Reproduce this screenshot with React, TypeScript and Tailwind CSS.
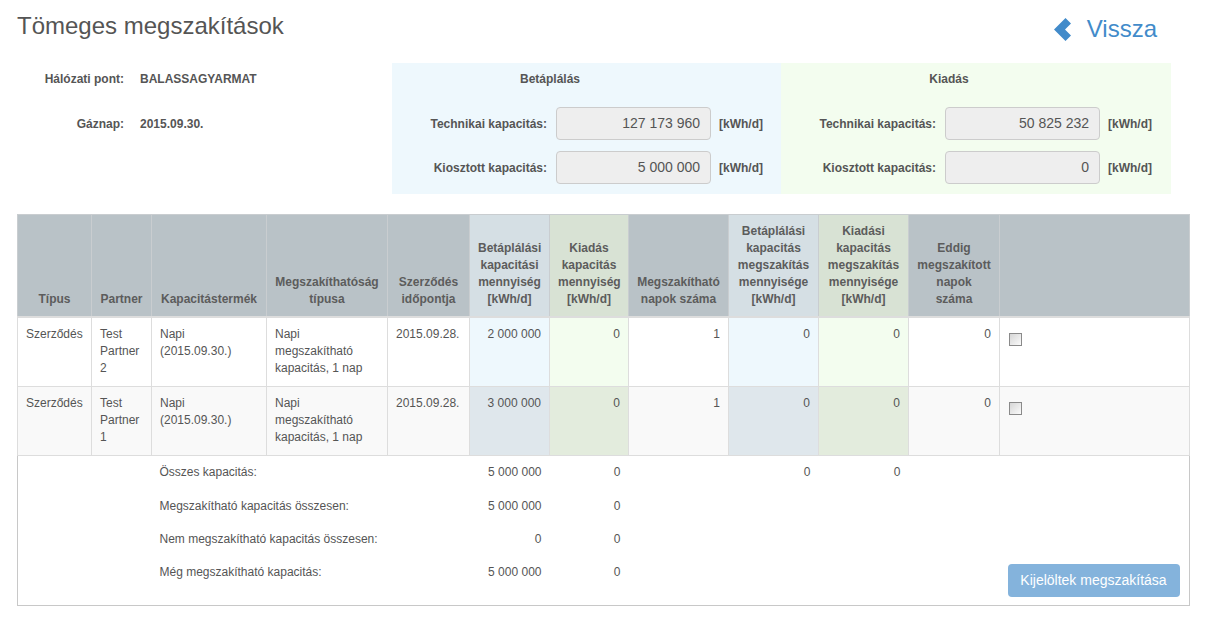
import React from 'react'

interface IRow {
   tipus: string
   partner: string
   termek: string
   megszakithatosag: string
   datum: string
   betap: string
   kiadas: string
   napok: string
   betapMegsz: string
   kiadasMegsz: string
   eddig: string
}

const rows: IRow[] = [
   {
      tipus: 'Szerződés',
      partner: 'Test Partner 2',
      termek: 'Napi (2015.09.30.)',
      megszakithatosag: 'Napi megszakítható kapacitás, 1 nap',
      datum: '2015.09.28.',
      betap: '2 000 000',
      kiadas: '0',
      napok: '1',
      betapMegsz: '0',
      kiadasMegsz: '0',
      eddig: '0',
   },
   {
      tipus: 'Szerződés',
      partner: 'Test Partner 1',
      termek: 'Napi (2015.09.30.)',
      megszakithatosag: 'Napi megszakítható kapacitás, 1 nap',
      datum: '2015.09.28.',
      betap: '3 000 000',
      kiadas: '0',
      napok: '1',
      betapMegsz: '0',
      kiadasMegsz: '0',
      eddig: '0',
   },
]

const summary = [
   { label: 'Összes kapacitás:', betap: '5 000 000', kiadas: '0', extra: true, h: 'h-[33px]' },
   { label: 'Megszakítható kapacitás összesen:', betap: '5 000 000', kiadas: '0', extra: false, h: 'h-[34px]' },
   { label: 'Nem megszakítható kapacitás összesen:', betap: '0', kiadas: '0', extra: false, h: 'h-[33px]' },
   { label: 'Még megszakítható kapacitás:', betap: '5 000 000', kiadas: '0', extra: false, h: 'h-[33px]' },
]

function CapacityPanel({
   title,
   titleWidth,
   bg,
   technikai,
   kiosztott,
}: {
   title: string
   titleWidth: string
   bg: string
   technikai: string
   kiosztott: string
}) {
   const line = (label: string, value: string, extra: string) => (
      <div className={`flex items-center ${extra}`}>
         <div className="w-[155px] text-right font-bold">{label}</div>
         <div className="ml-[9px] flex h-[33px] w-[155px] items-center justify-end rounded-[4px] border border-[#ccc] bg-[#eeeeee] px-[10px] text-[14px]">
            {value}
         </div>
         <div className="ml-[8px] font-bold">[kWh/d]</div>
      </div>
   )
   return (
      <div className={`flex-none ${bg} pt-[8px] pb-[10px]`}>
         <div className={`${titleWidth} text-center font-bold leading-[17px]`}>{title}</div>
         {line('Technikai kapacitás:', technikai, 'mt-[19px]')}
         {line('Kiosztott kapacitás:', kiosztott, 'mt-[11px]')}
      </div>
   )
}

function Checkbox() {
   return (
      <span className="mt-[7px] ml-[1px] block h-[13px] w-[13px] border border-[#8a8a8a] bg-gradient-to-br from-[#d6d6d6] to-[#fbfbfb]" />
   )
}

export default function App() {
   const th = 'border border-[#c9cdd0] p-[8px] align-bottom text-center font-bold leading-[17px] text-[#5c5c5c]'
   const td = 'border border-[#dddddd] px-[8px] pt-[8px] pb-[9px] align-top leading-[17px]'

   return (
      <div className="min-h-[625px] w-[1214px] bg-white pl-[17px] font-['Liberation_Sans',Arial,sans-serif] text-[12px] text-[#555]">
         <div className="w-[1172px]">
            {/* header */}
            <div className="flex h-[39px] items-start justify-between pt-[13px]">
               <h1 className="text-[24px] leading-[26px] text-[#555]">Tömeges megszakítások</h1>
               <a className="mt-[3px] mr-[32px] flex h-[26px] items-center text-[24px] leading-[26px] text-[#428bca]">
                  <svg width="18" height="23" viewBox="0 0 18 23" className="mt-[1px]">
                     <polygon points="0,11.5 11.5,0 17,5.5 11,11.5 17,17.5 11.5,23" fill="#428bca" />
                  </svg>
                  <span className="ml-[15px]">Vissza</span>
               </a>
            </div>

            {/* info */}
            <div className="mt-[24px] flex">
               <div className="w-[375px] flex-none pt-[8px] font-bold">
                  <div className="flex leading-[17px]">
                     <div className="w-[107px] text-right">Hálózati pont:</div>
                     <div className="ml-[16px]">BALASSAGYARMAT</div>
                  </div>
                  <div className="mt-[19px] flex h-[33px] items-center">
                     <div className="w-[107px] text-right">Gáznap:</div>
                     <div className="ml-[16px]">2015.09.30.</div>
                  </div>
               </div>
               <div className="w-[389px] flex-none">
                  <CapacityPanel
                     title="Betáplálás"
                     titleWidth="w-[316px]"
                     bg="bg-[#eef8fd]"
                     technikai="127 173 960"
                     kiosztott="5 000 000"
                  />
               </div>
               <div className="w-[390px] flex-none">
                  <CapacityPanel
                     title="Kiadás"
                     titleWidth="w-[336px]"
                     bg="bg-[#f3fdef]"
                     technikai="50 825 232"
                     kiosztott="0"
                  />
               </div>
            </div>

            {/* table */}
            <table className="mt-[20px] w-[1172px] table-fixed border-collapse border border-[#c8c8c8]">
               <colgroup>
                  <col className="w-[74px]" />
                  <col className="w-[60px]" />
                  <col className="w-[115px]" />
                  <col className="w-[121px]" />
                  <col className="w-[82px]" />
                  <col className="w-[80px]" />
                  <col className="w-[79px]" />
                  <col className="w-[100px]" />
                  <col className="w-[90px]" />
                  <col className="w-[90px]" />
                  <col className="w-[91px]" />
                  <col className="w-[190px]" />
               </colgroup>
               <thead>
                  <tr className="border-b-2 border-[#dddddd]">
                     <th className={`${th} bg-[#b9c2c7]`}>Típus</th>
                     <th className={`${th} bg-[#b9c2c7]`}>Partner</th>
                     <th className={`${th} bg-[#b9c2c7]`}>Kapacitástermék</th>
                     <th className={`${th} bg-[#b9c2c7]`}>Megszakíthatóság típusa</th>
                     <th className={`${th} bg-[#b9c2c7]`}>Szerződés időpontja</th>
                     <th className={`${th} bg-[#d5dfe4]`}>Betáplálási kapacitási mennyiség [kWh/d]</th>
                     <th className={`${th} bg-[#d8e2d4]`}>Kiadás kapacitás mennyiség [kWh/d]</th>
                     <th className={`${th} bg-[#b9c2c7]`}>Megszakítható napok száma</th>
                     <th className={`${th} bg-[#d5dfe4]`}>Betáplálási kapacitás megszakítás mennyisége [kWh/d]</th>
                     <th className={`${th} bg-[#d8e2d4]`}>Kiadási kapacitás megszakítás mennyisége [kWh/d]</th>
                     <th className={`${th} bg-[#b9c2c7]`}>Eddig megszakított napok száma</th>
                     <th className={`${th} bg-[#b9c2c7]`}></th>
                  </tr>
               </thead>
               <tbody>
                  {rows.map((r, i) => {
                     const odd = i % 2 === 1
                     const blue = odd ? 'bg-[#dfe7ec]' : 'bg-[#eef8fd]'
                     const green = odd ? 'bg-[#e3ecdd]' : 'bg-[#f3fdef]'
                     return (
                        <tr key={i} className={odd ? 'bg-[#f9f9f9]' : 'bg-white'}>
                           <td className={td}>{r.tipus}</td>
                           <td className={td}>{r.partner}</td>
                           <td className={td}>{r.termek}</td>
                           <td className={td}>{r.megszakithatosag}</td>
                           <td className={td}>{r.datum}</td>
                           <td className={`${td} ${blue} text-right`}>{r.betap}</td>
                           <td className={`${td} ${green} text-right`}>{r.kiadas}</td>
                           <td className={`${td} text-right`}>{r.napok}</td>
                           <td className={`${td} ${blue} text-right`}>{r.betapMegsz}</td>
                           <td className={`${td} ${green} text-right`}>{r.kiadasMegsz}</td>
                           <td className={`${td} text-right`}>{r.eddig}</td>
                           <td className={td}>
                              <Checkbox />
                           </td>
                        </tr>
                     )
                  })}
               </tbody>
               <tfoot>
                  {summary.map((s, i) => (
                     <tr key={i} className={s.h}>
                        <td colSpan={2}></td>
                        <td colSpan={3} className="px-[8px] align-middle whitespace-nowrap">
                           {s.label}
                        </td>
                        <td className="px-[8px] text-right align-middle">{s.betap}</td>
                        <td className="px-[8px] text-right align-middle">{s.kiadas}</td>
                        <td></td>
                        <td className="px-[8px] text-right align-middle">{s.extra ? '0' : ''}</td>
                        <td className="px-[8px] text-right align-middle">{s.extra ? '0' : ''}</td>
                        <td></td>
                        {i === 0 && (
                           <td rowSpan={5} className="pr-[8px] pb-[8px] pl-[8px] align-bottom">
                              <button
                                 type="button"
                                 className="h-[33px] w-[172px] rounded-[4px] bg-[#84b3dc] text-[14px] whitespace-nowrap text-white"
                              >
                                 Kijelöltek megszakítása
                              </button>
                           </td>
                        )}
                     </tr>
                  ))}
                  <tr className="h-[17px]">
                     <td colSpan={11}></td>
                  </tr>
               </tfoot>
            </table>
         </div>
      </div>
   )
}
